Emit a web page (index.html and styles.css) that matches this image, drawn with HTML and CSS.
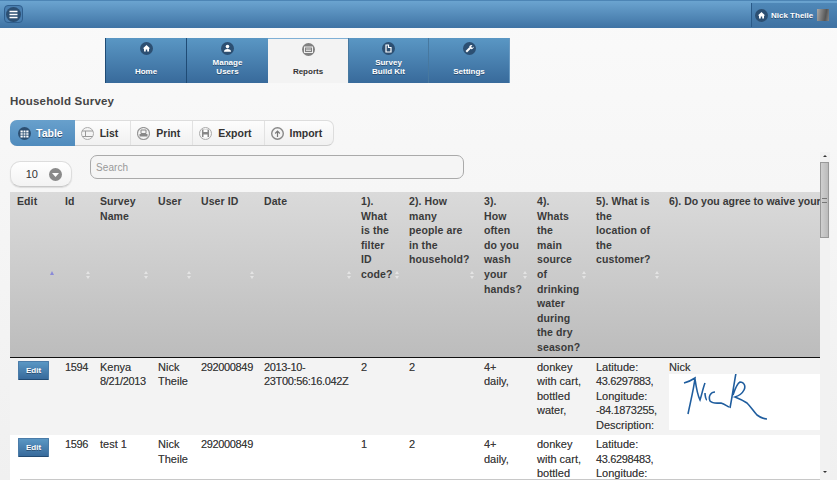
FILE: index.html
```html
<!DOCTYPE html>
<html lang="en">
<head>
    <meta charset="UTF-8">
    <title>Household Survey</title>
    <link rel="stylesheet" href="styles.css">
</head>
<body>
    <header class="topbar">
        <button class="menu-btn">
            <svg width="15" height="15" viewBox="0 0 15 15"><circle cx="7.5" cy="7.5" r="7.5" fill="#2c4f72"/><path d="M3.5 4.5h8M3.5 7.5h8M3.5 10.5h8" stroke="#fff" stroke-width="1.6"/></svg>
        </button>
        <div class="user-box">
            <svg width="13" height="13" viewBox="0 0 13 13"><circle cx="6.5" cy="6.5" r="6.5" fill="#2c4f72"/><path d="M6.5 3L2.8 6.6h1.2v3h1.8V7.6h1.4v2h1.8v-3h1.2z" fill="#fff"/></svg>
            <span>Nick Theile</span>
            <i class="avatar"></i>
        </div>
    </header>

    <nav class="tabs">
        <a class="tab">
            <svg width="13" height="13" viewBox="0 0 13 13"><circle cx="6.5" cy="6.5" r="6.5" fill="#2c4f72"/><path d="M6.5 3L2.8 6.6h1.2v3h1.8V7.6h1.4v2h1.8v-3h1.2z" fill="#fff"/></svg>
            <span>Home</span>
        </a>
        <a class="tab">
            <svg width="13" height="13" viewBox="0 0 13 13"><circle cx="6.5" cy="6.5" r="6.5" fill="#2c4f72"/><circle cx="6.5" cy="4.6" r="1.8" fill="#fff"/><path d="M3 9.8c0-2 1.4-2.8 3.5-2.8s3.5.8 3.5 2.800z" fill="#fff"/></svg>
            <span>Manage<br>Users</span>
        </a>
        <a class="tab active">
            <svg width="13" height="13" viewBox="0 0 13 13"><circle cx="6.5" cy="6.5" r="6.5" fill="#808080"/><rect x="2.5" y="4" width="8" height="5.5" fill="none" stroke="#eee"/><path d="M4 6h5M4 7.5h5" stroke="#eee" stroke-width=".8"/></svg>
            <span>Reports</span>
        </a>
        <a class="tab soft">
            <svg width="13" height="13" viewBox="0 0 13 13"><circle cx="6.5" cy="6.5" r="6.5" fill="#2c4f72"/><path d="M4 3h2.500v2.500H9V10H4z" fill="none" stroke="#fff" stroke-width="1.2"/></svg>
            <span>Survey<br>Build Kit</span>
        </a>
        <a class="tab soft">
            <svg width="13" height="13" viewBox="0 0 13 13"><circle cx="6.5" cy="6.5" r="6.5" fill="#2c4f72"/><path d="M3.3 9.700L7 6" stroke="#fff" stroke-width="2"/><path d="M6.200 5.200a2.300 2.300 0 0 1 3.300-2l-1.300 1.300.4 1 1 .3 1.200-1.200a2.300 2.300 0 0 1-3.600 2.100z" fill="#fff"/></svg>
            <span>Settings</span>
        </a>
    </nav>

    <h1 class="page-title">Household Survey</h1>

    <div class="toolbar">
        <a class="tool active">
            <svg width="13" height="13" viewBox="0 0 13 13"><circle cx="6.5" cy="6.5" r="6.5" fill="#2c4f72"/><path d="M2.500 3.500h8v7h-8z" fill="#fff"/><path d="M5.200 3v8M7.800 3v8M2 5.800h9M2 8.200h9" stroke="#2c4f72" stroke-width=".8"/></svg>
            Table
        </a>
        <a class="tool">
            <svg width="13" height="13" viewBox="0 0 13 13"><circle cx="6.5" cy="6.5" r="6" fill="#f4f4f4" stroke="#aaa"/><path d="M1 4h11M1.500 9.500h10M4.500 4v5.500" stroke="#999" fill="none"/></svg>
            List
        </a>
        <a class="tool">
            <svg width="13" height="13" viewBox="0 0 13 13"><circle cx="6.5" cy="6.5" r="6" fill="#f4f4f4" stroke="#999" stroke-width="1.2"/><path d="M4 3h5v3.500H4z" fill="none" stroke="#888"/><path d="M2.500 7h8v2.500h-8z" fill="#888"/></svg>
            Print
        </a>
        <a class="tool">
            <svg width="13" height="13" viewBox="0 0 13 13"><circle cx="6.5" cy="6.5" r="6" fill="#f4f4f4" stroke="#aaa"/><path d="M3 2.500h6.500l.5.500v7H3z" fill="#888"/><path d="M4.500 2.500h4V5h-4zM4.500 7.500h4V10h-4z" fill="#fff"/></svg>
            Export
        </a>
        <a class="tool">
            <svg width="13" height="13" viewBox="0 0 13 13"><circle cx="6.5" cy="6.5" r="5.800" fill="#f4f4f4" stroke="#888" stroke-width="1.4"/><path d="M6.500 10V4.500M4.200 6.500l2.300-2.300 2.300 2.300" fill="none" stroke="#777" stroke-width="1.200"/></svg>
            Import
        </a>
    </div>

    <div class="table-area">
        <div class="table-scroll">
            <div class="filters">
                <div class="page-size">
                    <span>10</span>
                    <svg width="13" height="13" viewBox="0 0 13 13"><circle cx="6.5" cy="6.5" r="6.5" fill="#8a8a8a"/><path d="M3 5l3.500 4L10 5z" fill="#fff"/></svg>
                </div>
                <div class="search">Search</div>
            </div>

            <table class="grid">
                <colgroup>
                    <col class="c-edit"><col class="c-id"><col class="c-name"><col class="c-user"><col class="c-uid"><col class="c-date">
                    <col class="c-q1"><col class="c-q2"><col class="c-q3"><col class="c-q4"><col class="c-q5"><col class="c-q6">
                </colgroup>
                <thead>
                    <tr>
                        <th>Edit<i class="sort sorted"></i></th>
                        <th>Id<i class="sort"></i></th>
                        <th>Survey Name<i class="sort"></i></th>
                        <th>User<i class="sort"></i></th>
                        <th>User ID<i class="sort"></i></th>
                        <th>Date<i class="sort"></i></th>
                        <th>1). What is the filter ID code?<i class="sort"></i></th>
                        <th>2). How many people are in the household?<i class="sort"></i></th>
                        <th>3).<br>How often do you wash your hands?<i class="sort"></i></th>
                        <th>4). Whats the<br>main source of drinking water during the dry season?<i class="sort"></i></th>
                        <th>5). What is the location of the customer?<i class="sort"></i></th>
                        <th class="nowrap">6). Do you agree to waive your</th>
                    </tr>
                </thead>
                <tbody>
                    <tr class="odd">
                        <td><button class="edit-btn">Edit</button></td>
                        <td class="num">1594</td>
                        <td>Kenya <span class="num">8/21/2013</span></td>
                        <td>Nick Theile</td>
                        <td class="num">292000849</td>
                        <td class="num">2013-10-23T00:56:16.042Z</td>
                        <td>2</td>
                        <td>2</td>
                        <td>4+ daily,</td>
                        <td>donkey with cart, bottled water,</td>
                        <td>Latitude: <span class="num">43.6297883,</span> Longitude: <span class="num">-84.1873255,</span> Description:</td>
                        <td>
                            Nick
                            <svg class="signature" viewBox="0 0 151 56" width="151" height="56">
                                <path d="M15 9C19 8 23 6 26 4C25 14 21 30 19 40M26 5C27 12 29 22 31 26C33 20 34 14 36 9M36 19C36 22 37 26 38 26M46 18C42 18 39 22 41 27C44 30 48 29 52 29C55 30 58 32 60 33M67 -1C65 10 63 24 61 34M64 21C66 15 69 9 71 8C75 8 77 12 75 16C73 20 69 22 66 23C71 25 75 27 78 29C82 33 85 38 88 41C92 44 95 45 98 45" fill="none" stroke="#1f5d9e" stroke-width="1.6"/>
                            </svg>
                        </td>
                    </tr>
                    <tr class="even">
                        <td><button class="edit-btn">Edit</button></td>
                        <td class="num">1596</td>
                        <td>test 1</td>
                        <td>Nick Theile</td>
                        <td class="num">292000849</td>
                        <td></td>
                        <td>1</td>
                        <td>2</td>
                        <td>4+ daily,</td>
                        <td>donkey with cart, bottled</td>
                        <td>Latitude: <span class="num">43.6298483,</span> Longitude:</td>
                        <td></td>
                    </tr>
                </tbody>
            </table>
        </div>

        <div class="scrollbar">
            <i class="arrow up"></i>
            <div class="thumb"><b></b></div>
            <i class="arrow down"></i>
        </div>
    </div>
</body>
</html>
```

FILE: styles.css
```css
* {
    box-sizing: border-box;
}
body {
    margin: 0;
    height: 480px;
    overflow: hidden;
    display: flex;
    flex-direction: column;
    background: linear-gradient(#fafafa, #f0f0f0);
    font-family: "Liberation Sans", Arial, sans-serif;
    font-size: 11px;
    color: #333;
}

/* top bar */
.topbar {
    flex: none;
    height: 28px;
    display: flex;
    justify-content: space-between;
    background: linear-gradient(#6ba4d0, #3f73a4);
    border-top: 1px solid #4d85b5;
}
.menu-btn {
    width: 19px;
    height: 18px;
    margin: 4px 0 0 4px;
    padding: 0;
    display: flex;
    align-items: center;
    justify-content: center;
    background: #4a7fb0;
    border: 1px solid #2f5f8e;
    border-radius: 4px;
}
.user-box {
    height: 24px;
    margin-top: 2px;
    width: 86px;
    padding-left: 3px;
    display: flex;
    align-items: center;
    gap: 3px;
    border-left: 1px solid #2a5a88;
    background: linear-gradient(#4f88b8, #3f72a2);
    color: #fff;
    font-size: 8px;
    font-weight: bold;
    white-space: nowrap;
}
.user-box span {
    margin-right: 1px;
    text-shadow: 0 1px 0 #2c4f72;
}
.avatar {
    width: 12px;
    height: 12px;
    background: linear-gradient(100deg, #a9a9a9, #555 70%, #888);
}

/* main tabs */
.tabs {
    flex: none;
    display: grid;
    grid-template-columns: 81px 82px 80px 80px 82px;
    width: 405px;
    height: 45px;
    margin: 10px 0 0 105px;
}
.tab {
    display: flex;
    flex-direction: column;
    align-items: center;
    padding-top: 4px;
    background: linear-gradient(#5a97c4, #386a9b);
    border-left: 1px solid #1f4b75;
    color: #fff;
    font-size: 8px;
    font-weight: bold;
    line-height: 9px;
    text-align: center;
    text-shadow: 0 1px 0 #2c4f72;
}
.tab.soft {
    border-left-color: #47789f;
}
.tab:last-child {
    border-right: 1px solid #6a9ac2;
}
.tab span {
    margin-top: auto;
    padding-bottom: 7px;
}
.tab.active {
    background: #f3f3f3;
    border-left: none;
    border-top: 1px solid #7fb0d6;
    color: #333;
    text-shadow: none;
}

.page-title {
    flex: none;
    margin: 11px 0 0 10px;
    font-size: 11.5px;
    line-height: 14px;
    letter-spacing: .2px;
    color: #444;
}

/* table/list/print buttons */
.toolbar {
    flex: none;
    display: flex;
    align-self: flex-start;
    height: 26px;
    margin: 12px 0 0 10px;
    background: linear-gradient(#fdfdfd, #f1f1f1);
    border: 1px solid #ddd;
    border-bottom-color: #ccc;
    border-radius: 7px;
}
.tool {
    display: flex;
    align-items: center;
    gap: 6px;
    padding: 0 12px 0 6px;
    border-left: 1px solid #e2e2e2;
    font-size: 10.5px;
    font-weight: bold;
    color: #333;
}
.tool:last-child {
    padding-right: 11px;
}
.tool.active {
    margin: -1px 0 -1px -1px;
    padding: 0 12px 0 8px;
    gap: 5px;
    border: none;
    border-radius: 7px 0 0 7px;
    background: linear-gradient(#68a0cc, #4f8bbd);
    color: #fff;
    text-shadow: 0 1px 0 #2c4f72;
}
.tool.active + .tool {
    border-left: none;
}

/* table area */
.table-area {
    position: relative;
    flex: 1;
    min-height: 0;
    display: flex;
    margin-top: 6px;
    overflow: hidden;
}
.table-area::after {
    content: "";
    position: absolute;
    left: 20px;
    bottom: 0;
    width: 800px;
    height: 1px;
    background: #c8c8c8;
}
.table-scroll {
    width: 820px;
    flex: none;
    overflow: hidden;
    padding-left: 10px;
}
.filters {
    display: flex;
    height: 40px;
    padding-top: 3px;
    gap: 18px;
}
.page-size {
    width: 62px;
    height: 26px;
    margin-top: 6px;
    display: flex;
    align-items: center;
    justify-content: flex-end;
    gap: 11px;
    padding-right: 9px;
    background: linear-gradient(#fff, #f3f3f3);
    border: 1px solid #ddd;
    border-bottom-color: #c8c8c8;
    border-radius: 10px;
    box-shadow: 0 1px 1px #ddd;
}
.search {
    width: 374px;
    height: 24px;
    padding: 0 5px;
    line-height: 24px;
    font-size: 10px;
    letter-spacing: .1px;
    color: #999;
    background: #f5f5f5;
    border: 1px solid #aaa;
    border-radius: 7px;
}

.grid {
    table-layout: fixed;
    width: 810px;
    border-collapse: collapse;
    line-height: 14.6px;
}
.c-edit { width: 48px; }
.c-id { width: 35px; }
.c-name { width: 58px; }
.c-user { width: 43px; }
.c-uid { width: 63px; }
.c-date { width: 97px; }
.c-q1 { width: 48px; }
.c-q2 { width: 75px; }
.c-q3 { width: 53px; }
.c-q4 { width: 59px; }
.c-q5 { width: 73px; }
.c-q6 { width: 158px; }

.grid th {
    position: relative;
    height: 165px;
    padding: 2px 7px;
    vertical-align: top;
    text-align: left;
    font-size: 10.5px;
    font-weight: bold;
    letter-spacing: .1px;
    background: linear-gradient(#dadada, #bcbcbc);
    border-bottom: 1px solid #111;
    color: #3a3a3a;
}
.grid th.nowrap {
    white-space: nowrap;
    overflow: hidden;
    padding-right: 0;
    letter-spacing: 0;
}
.grid td {
    padding: 2px 7px;
    vertical-align: top;
    color: #3a3a3a;
    text-shadow: 0 0 .6px rgba(0, 0, 0, .45);
}
.num {
    letter-spacing: -.35px;
}
.odd {
    background: #f3f3f3;
}
.even {
    background: #fff;
}
.odd td {
    height: 78px;
}
.edit-btn {
    display: block;
    width: 31px;
    height: 19px;
    margin: 1px 0 0 1px;
    padding: 0;
    font-family: inherit;
    font-size: 8px;
    font-weight: bold;
    color: #fff;
    text-shadow: 0 1px 0 #2c4f72;
    background: linear-gradient(#5a97c4, #386a9b);
    border: 1px solid #4a7ba8;
    border-bottom-color: #234b73;
    border-radius: 1px;
}
.signature {
    display: block;
    background: #fff;
}

/* sort arrows sit over the header cell */
.sort {
    position: absolute;
    right: 2px;
    top: 79px;
    width: 5px;
    height: 8px;
}
.sort::before, .sort::after {
    content: "";
    position: absolute;
    left: 0;
    border-left: 2.5px solid transparent;
    border-right: 2.5px solid transparent;
}
.sort::before {
    top: 0;
    border-bottom: 3px solid #e4e4e4;
}
.sort::after {
    bottom: 0;
    border-top: 3px solid #e4e4e4;
}
.sort.sorted {
    right: 3px;
    top: 79px;
}
.sort.sorted::before {
    border-bottom: 4px solid #8a8ad8;
}
.sort.sorted::after {
    display: none;
}

/* scrollbar */
.scrollbar {
    width: 10px;
    flex: none;
    display: flex;
    flex-direction: column;
    background: #f2f2f2;
}
.thumb {
    width: 9px;
    height: 76px;
    margin-top: 1px;
    display: flex;
    align-items: center;
    justify-content: center;
    background: linear-gradient(90deg, #cfcfcf, #bbb);
    border: 1px solid #999;
}
.thumb b {
    width: 5px;
    height: 5px;
    border-top: 1px solid #777;
    border-bottom: 1px solid #777;
}
.arrow {
    display: block;
    width: 9px;
    height: 9px;
    position: relative;
}
.arrow::after {
    content: "";
    position: absolute;
    left: 2.5px;
    top: 3px;
    border-left: 2px solid transparent;
    border-right: 2px solid transparent;
}
.arrow.up::after {
    border-bottom: 2px solid #333;
}
.arrow.down {
    margin-top: auto;
    margin-bottom: 3px;
}
.arrow.down::after {
    border-top: 2px solid #333;
}
```
